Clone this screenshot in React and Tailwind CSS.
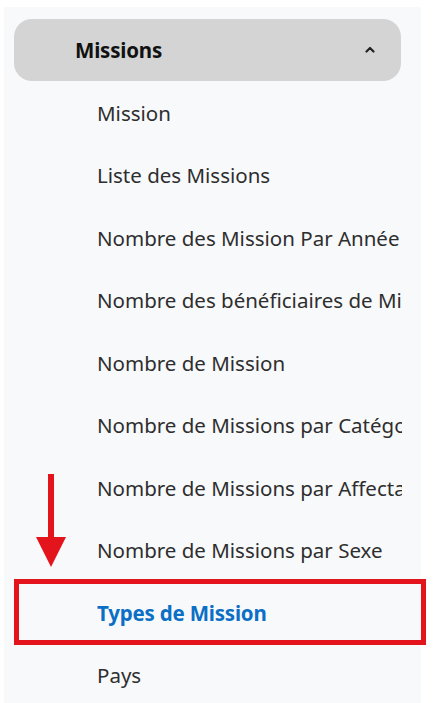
import React from 'react';

const items = [
  'Mission',
  'Liste des Missions',
  'Nombre des Mission Par Année',
  'Nombre des bénéficiaires de Missions',
  'Nombre de Mission',
  'Nombre de Missions par Catégorie',
  'Nombre de Missions par Affectation',
  'Nombre de Missions par Sexe',
  'Types de Mission',
  'Pays',
];

function App() {
  return (
    <div className="relative min-h-[703px] bg-white pt-[7px] pl-[4px] font-['Noto_Sans',sans-serif]">
      <div className="w-[417px] h-[696px] bg-[#f8f9fb] pt-[12px]">
        {/* section header */}
        <div className="ml-[10px] mr-[20px] h-[62px] rounded-[18px] bg-[#d4d4d4] flex items-center pl-[61px] pr-[25px]">
          <span className="flex-1 text-[20.5px] font-bold text-[#111] tracking-[-0.2px]">Missions</span>
          <svg width="12" height="8" viewBox="0 0 12 8" className="mt-[-3px]">
            <path d="M2.5 6.5 L6 3 L9.5 6.5" fill="none" stroke="#222" strokeWidth="2.2" strokeLinecap="round" strokeLinejoin="round" />
          </svg>
        </div>

        {/* sub items */}
        <div className="mt-[1px]">
          {items.map((item) => {
            const active = item === 'Types de Mission';
            return (
              <div key={item} className="relative h-[62.5px] flex items-center">
                <span
                  className={
                    active
                      ? 'ml-[93px] w-[305px] overflow-hidden whitespace-nowrap text-[20.5px] font-bold text-[#0b6fc6] tracking-[-0.2px]'
                      : 'ml-[93px] w-[305px] overflow-hidden whitespace-nowrap text-[20.5px] text-[#2e2e2e]'
                  }
                >
                  {item}
                </span>
                {active && (
                  <div className="absolute top-[-3px] left-[10px] w-[412px] h-[66px] border-[5px] border-[#e3141b]" />
                )}
              </div>
            );
          })}
        </div>
      </div>

      {/* red arrow pointing at the highlighted item */}
      <svg width="32" height="94" viewBox="0 0 32 94" className="absolute left-[35px] top-[474px]">
        <rect x="13" y="0" width="6" height="64" fill="#e3141b" />
        <polygon points="1,63 31,63 16,93" fill="#e3141b" />
      </svg>
    </div>
  );
}

export default App;
